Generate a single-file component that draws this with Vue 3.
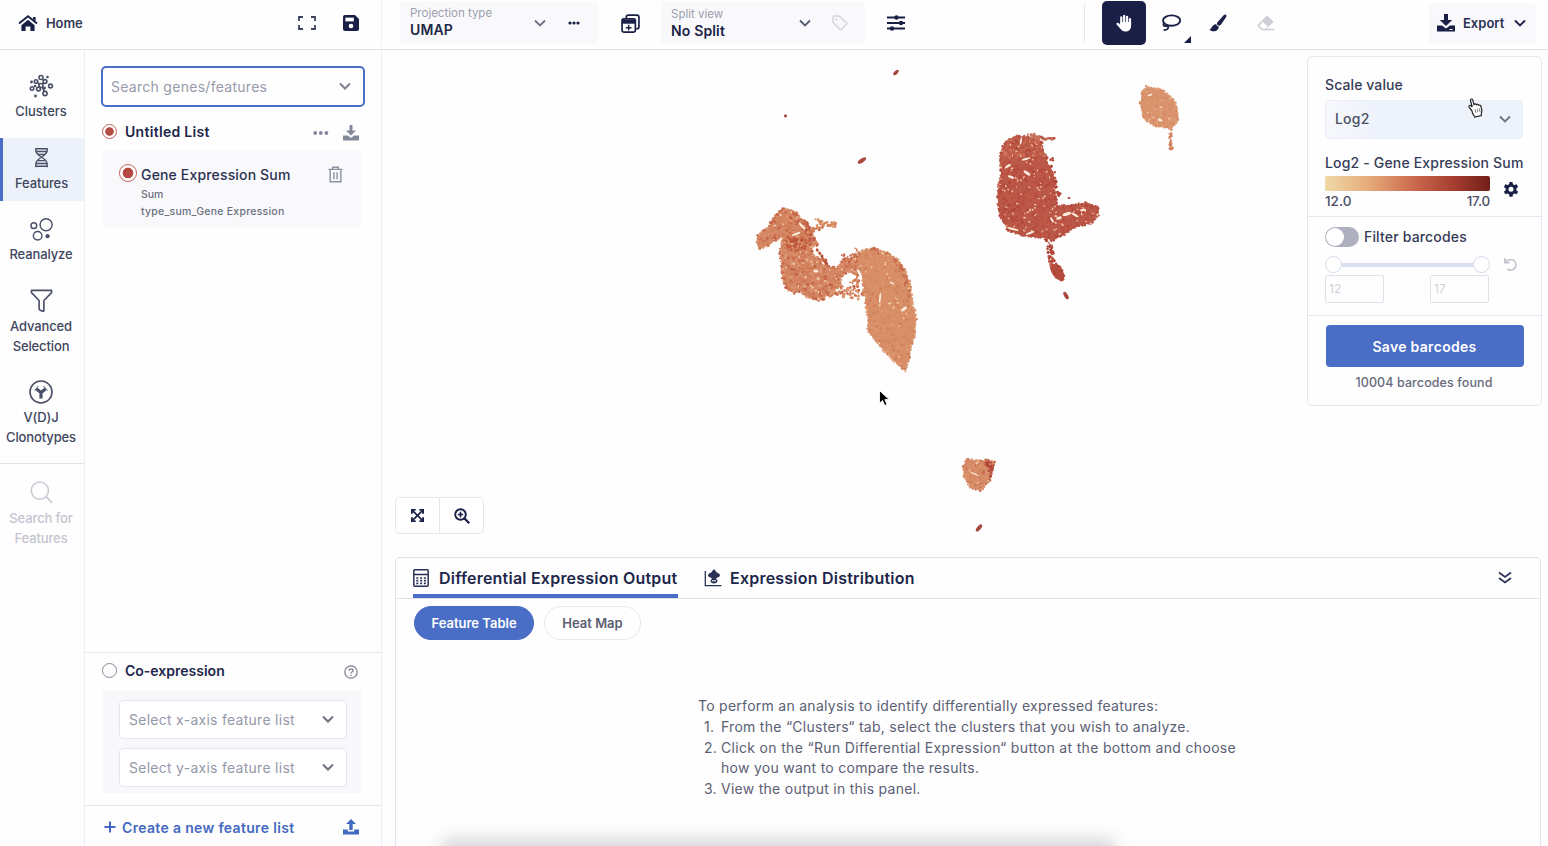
<script setup>
const navItems = [
  { id: 'clusters', lines: ['Clusters'] },
  { id: 'features', lines: ['Features'], active: true },
  { id: 'reanalyze', lines: ['Reanalyze'] },
  { id: 'advanced', lines: ['Advanced', 'Selection'] },
  { id: 'vdj', lines: ['V(D)J', 'Clonotypes'] },
]
const axes = ['Select x-axis feature list', 'Select y-axis feature list']

// Seeded generator keeps the projection stable between renders.
let seed = 1337
function rand() {
  seed = (seed * 1664525 + 1013904223) % 4294967296
  return seed / 4294967296
}
function inside(x, y, pts) {
  let hit = false
  for (let i = 0, j = pts.length - 1; i < pts.length; j = i++) {
    const [xi, yi] = pts[i]
    const [xj, yj] = pts[j]
    if (yi > y !== yj > y && x < ((xj - xi) * (y - yi)) / (yj - yi) + xi) hit = !hit
  }
  return hit
}
const shapes = [
  {
    ox: 740, oy: 190, fill: '#d48662', dots: 420, edge: true,
    tones: ['#cf7a56', '#da8f69', '#c96c4b', '#d99470', '#c25f48', '#cf7a57'], gaps: 60,
    pts: [[130,54],[168,65],[180,85],[203,98],[212,125],[235,163],[215,170],[214,195],[245,207],[262,228],[290,234],[312,206],[345,202],[362,196],[355,232],[325,238],[303,262],[300,290],[268,308],[245,330],[205,323],[180,303],[165,310],[140,296],[128,270],[125,220],[120,185],[130,152],[103,147],[85,166],[55,176],[52,137],[85,112],[105,77]],
  },
  {
    ox: 740, oy: 190, fill: 'none', dots: 46,
    tones: ['#b94f3a', '#c4623f'], gaps: 0,
    pts: [[130,148],[160,140],[205,150],[215,165],[190,180],[150,185]],
  },
  {
    ox: 740, oy: 190, fill: 'none', dots: 34,
    tones: ['#bd5a45', '#c8694a'], gaps: 0,
    pts: [[165,68],[182,85],[205,98],[214,130],[230,160],[212,158],[195,115],[170,95]],
  },
  {
    ox: 740, oy: 190, fill: '#d88f68', dots: 330, edge: true,
    tones: ['#dc966f', '#d4875f', '#d98e66', '#d08059', '#dd9b73'], gaps: 26,
    pts: [[350,205],[370,180],[400,174],[440,188],[475,210],[495,240],[508,275],[516,330],[528,390],[522,440],[510,490],[495,543],[465,515],[425,475],[385,425],[383,380],[378,330],[372,290],[362,240]],
  },
  {
    ox: 740, oy: 190, fill: 'none', dots: 34,
    tones: ['#c4694c', '#cb7351'], gaps: 0,
    pts: [[365,182],[400,174],[440,188],[475,210],[495,240],[508,275],[516,330],[506,325],[488,262],[462,215],[400,184]],
  },
  {
    ox: 740, oy: 190, fill: 'none', dots: 85,
    tones: ['#d58560', '#c8694a', '#dc9870'], gaps: 0,
    pts: [[270,290],[335,285],[375,275],[380,322],[355,332],[290,316],[255,325]],
  },
  {
    ox: 740, oy: 190, fill: 'none', dots: 42,
    tones: ['#d58560', '#c8694a', '#dc9870'], gaps: 0,
    pts: [[305,235],[350,225],[360,280],[325,282],[352,255]],
  },
  {
    ox: 740, oy: 190, fill: 'none', dots: 64,
    tones: ['#d88d64', '#dfa075', '#cf7650'], gaps: 0,
    pts: [[218,80],[250,96],[285,96],[295,114],[258,108],[242,120],[200,128],[238,100]],
  },
  {
    ox: 740, oy: 190, fill: 'none', dots: 18,
    tones: ['#b94f3a', '#c4623f'], gaps: 0,
    pts: [[228,175],[240,178],[268,218],[258,222]],
  },
  {
    ox: 740, oy: 190, fill: 'none', dots: 28,
    tones: ['#c4694c', '#d58560'], gaps: 0,
    pts: [[345,175],[362,182],[358,205],[305,208],[300,196],[345,192]],
  },
  {
    ox: 980, oy: 60, fill: '#bb5848', dots: 620, edge: true,
    tones: ['#b95042', '#b04638', '#c05c4b', '#b64c3e', '#bd5748'], gaps: 105,
    pts: [[100,231],[140,229],[183,243],[193,280],[203,312],[222,350],[226,400],[233,440],[290,432],[325,430],[352,440],[354,465],[330,490],[290,498],[245,527],[220,538],[190,533],[130,527],[85,512],[62,470],[54,430],[54,380],[64,340],[60,290],[72,252]],
  },
  {
    ox: 980, oy: 60, fill: 'none', dots: 90,
    tones: ['#c5654f', '#c96d56', '#c0604d'], gaps: 0,
    pts: [[100,231],[140,229],[183,243],[190,285],[120,290],[62,305],[72,252]],
  },
  {
    ox: 980, oy: 60, fill: 'none', dots: 68,
    tones: ['#b04435', '#c25f4c', '#a93c30'], gaps: 0,
    pts: [[192,535],[218,540],[224,590],[245,630],[215,640],[204,590]],
  },
  {
    ox: 980, oy: 60, fill: '#b54a3c', dots: 30,
    tones: ['#b04435', '#b84e40'], gaps: 0,
    pts: [[216,610],[240,618],[256,648],[244,664],[226,655],[212,630]],
  },
  {
    ox: 980, oy: 60, fill: 'none', dots: 34,
    tones: ['#c9755a', '#ba5242'], gaps: 0,
    pts: [[140,222],[175,222],[195,235],[228,226],[228,236],[200,240],[170,238],[160,230]],
  },
  {
    ox: 980, oy: 60, fill: 'none', dots: 40,
    tones: ['#b04435', '#ba5242'], gaps: 0,
    pts: [[192,282],[222,295],[220,318],[228,350],[232,395],[252,404],[228,410],[210,340]],
  },
  {
    ox: 980, oy: 60, fill: '#da946d', dots: 100, edge: true,
    tones: ['#dc9870', '#d78f69', '#dfa07a', '#d58b66'], gaps: 7,
    pts: [[485,95],[500,80],[540,88],[573,110],[590,140],[594,180],[575,206],[530,198],[490,175],[482,140]],
  },
  {
    ox: 980, oy: 60, fill: 'none', dots: 22,
    tones: ['#d78c65', '#c9755a'], gaps: 0,
    pts: [[567,206],[577,206],[578,268],[569,268]],
  },
  {
    ox: 963, oy: 459, fill: '#d78c68', dots: 90, edge: true,
    tones: ['#dc966f', '#cf7e5c', '#ca7052', '#d88f68'], gaps: 7,
    pts: [[12,3],[45,3],[97,8],[86,36],[79,66],[52,93],[24,86],[3,52],[3,20]],
  },
  {
    ox: 963, oy: 459, fill: 'none', dots: 22,
    tones: ['#b04435', '#ba5242'], gaps: 0,
    pts: [[62,8],[97,8],[88,36],[80,60],[72,34]],
  },
].map((s) => {
  const pts = s.pts.map(([x, y]) => [s.ox + x / 3, s.oy + y / 3])
  const xs = pts.map((p) => p[0])
  const ys = pts.map((p) => p[1])
  const x0 = Math.min(...xs), x1 = Math.max(...xs)
  const y0 = Math.min(...ys), y1 = Math.max(...ys)
  const pick = () => {
    for (let i = 0; i < 200; i++) {
      const x = x0 + rand() * (x1 - x0)
      const y = y0 + rand() * (y1 - y0)
      if (inside(x, y, pts)) return [x, y]
    }
    return pts[0]
  }
  const dots = []
  for (let i = 0; i < s.dots; i++) {
    const [x, y] = pick()
    dots.push({ x, y, r: 0.8 + rand() * 0.8, c: s.tones[Math.floor(rand() * s.tones.length)] })
  }
  if (s.edge) {
    pts.forEach(([ax, ay], i) => {
      const [bx, by] = pts[(i + 1) % pts.length]
      const n = Math.ceil(Math.hypot(bx - ax, by - ay) / 2.6)
      for (let k = 0; k < n; k++) {
        const t = k / n
        dots.push({
          x: ax + (bx - ax) * t + (rand() - 0.5) * 1.8,
          y: ay + (by - ay) * t + (rand() - 0.5) * 1.8,
          r: 0.8 + rand() * 0.7,
          c: s.tones[Math.floor(rand() * s.tones.length)],
        })
      }
    })
  }
  const gaps = []
  for (let i = 0; i < s.gaps; i++) {
    const [x, y] = pick()
    gaps.push({ x, y, rx: 0.6 + rand() * 1.1, ry: 0.45 + rand() * 0.45, a: Math.floor(rand() * 180) })
  }
  return { fill: s.fill, points: pts.map((p) => p.map((v) => v.toFixed(1)).join(',')).join(' '), dots, gaps }
})
const voids = [
  [802, 226, 4.5, 1.2, 50], [796, 234, 4.5, 1.1, -20], [816, 271, 2.6, 1.6, 0], [823, 263, 2, 1, 40], [780, 240, 3, 1.2, -40], [880, 298, 0.9, 5, 5],
  [904, 309, 3.5, 1.4, -35], [892, 283, 2.2, 0.9, 20], [1026, 159, 4.5, 1, -15], [1027, 173, 4, 1.4, 35], [1008, 166, 3.2, 1.2, -30],
  [1011, 177, 3.4, 1.2, 20], [1067, 214, 4.5, 1.6, -15], [1075, 215, 4, 1.1, 30], [1059, 218, 3, 1.3, -20], [1083, 210, 3, 1.2, -10], [1013, 229, 6, 1.1, 15], [1030, 233, 4.5, 1, -20],
  [1021, 141, 0.9, 3.6, 10], [1150, 95, 2.4, 0.9, -20], [1160, 120, 2.4, 1.2, 20], [1052, 220, 3, 1.1, 60], [975, 474, 5, 0.6, 25],
]
const specks = [
  [896, 72.5, 3.4, 1.8, -45], [785.5, 116, 1.6, 1.4, 0], [862, 160.5, 4.8, 2, -35], [1066, 295.5, 1.9, 4.2, -30], [979, 528, 4.4, 1.9, -50], [1069, 198, 1.5, 1.1, 0],
]
</script>

<template>
  <div class="app">
    <header class="topbar">
      <div class="top-left">
        <svg class="i-home" viewBox="0 0 20 17"><path d="M1 8.6 10 1.2l9 7.4" fill="none" stroke="#191f45" stroke-width="1.9" /><path d="M15 2h2.6v4.2L15 4z M10 4.8l6.6 5.4V16h-4.2v-4.6H7.6V16H3.4v-5.8z" fill="#191f45" /></svg>
        <span class="home">Home</span>
        <svg class="i-full" viewBox="0 0 18 14"><path d="M1 5V1h4M13 1h4v4M17 9v4h-4M5 13H1V9" fill="none" stroke="#3b4160" stroke-width="1.8" /></svg>
        <svg class="i-save" viewBox="0 0 16 16"><path d="M2 0h10l4 4v10a2 2 0 0 1-2 2H2a2 2 0 0 1-2-2V2a2 2 0 0 1 2-2z" fill="#191f45" /><path d="M2.4 2.6h8.4v3.8H2.4z" fill="#fff" /><circle cx="8" cy="11" r="2.3" fill="#fff" /></svg>
      </div>
      <div class="top-main">
        <div class="proj">
          <div class="pick pick-a"><span class="cap">Projection type</span><b>UMAP</b></div>
          <svg class="chev" viewBox="0 0 12 8"><path d="M1 1.5l5 5 5-5" fill="none" stroke="#6c7184" stroke-width="1.8" /></svg>
          <svg class="i-dots" viewBox="0 0 12 4"><g fill="#191f45"><circle cx="2" cy="2" r="1.6" /><circle cx="6" cy="2" r="1.6" /><circle cx="10" cy="2" r="1.6" /></g></svg>
        </div>
        <svg class="i-add" viewBox="0 0 18 18"><path d="M5 4V3a2 2 0 0 1 2-2h8a2 2 0 0 1 2 2v9a2 2 0 0 1-2 2h-1" fill="none" stroke="#191f45" stroke-width="1.6" /><rect x="1" y="4.5" width="12.6" height="12.6" rx="1.6" fill="#fff" stroke="#191f45" stroke-width="1.6" /><path d="M1 5h12.6v4.2H1z" fill="#191f45" /><path d="M7.3 10.300v5.400M4.600 13h5.400" stroke="#191f45" stroke-width="1.3" /></svg>
        <div class="proj split">
          <div class="pick pick-b"><span class="cap">Split view</span><b>No Split</b></div>
          <svg class="chev" viewBox="0 0 12 8"><path d="M1 1.5l5 5 5-5" fill="none" stroke="#565b74" stroke-width="1.8" /></svg>
          <svg class="i-tag" viewBox="0 0 16 16"><path d="M1 2.2C1 1.5 1.5 1 2.2 1h5L15 8.6 8.8 15 1 7.4z" fill="none" stroke="#d3d4dc" stroke-width="1.4" stroke-linejoin="round" /><circle cx="4.5" cy="4.5" r="1.1" fill="#d3d4dc" /></svg>
        </div>
        <svg class="i-sliders" viewBox="0 0 18 16"><path d="M0 2.5h18M0 8h18M0 13.5h18" stroke="#191f45" stroke-width="1.9" /><g fill="#191f45"><circle cx="9.5" cy="2.5" r="2.2" /><circle cx="14" cy="8" r="2.2" /><circle cx="5" cy="13.5" r="2.2" /></g></svg>
        <div class="tools">
          <span class="rule"></span>
          <span class="hand"><svg viewBox="0 0 16 18"><g fill="none" stroke="#fff" stroke-width="2.2" stroke-linecap="round"><path d="M5.3 10V3.4M8.2 9V1.8M11.1 9V2.8M14 10V5.2" /></g><path d="M4.2 8h10.9v4.2a5.3 5.3 0 0 1-5.3 5.3H9c-2 0-3.2-.9-4.4-2.4L.6 10.4c-.8-1.2.9-2.4 1.9-1.4l1.7 1.6z" fill="#fff" /></svg></span>
          <svg class="i-lasso" viewBox="0 0 20 18"><ellipse cx="10.6" cy="6.600" rx="8.6" ry="5.200" fill="none" stroke="#191f45" stroke-width="1.9" /><path d="M3.200 9c-1.600 1.600-.6 3.400 1.600 3.100 2.600-.5 3.300 1.400 1.800 2.800-1 1-2.400 1.300-4 1.200" fill="none" stroke="#191f45" stroke-width="1.8" /></svg>
          <i class="corner"></i>
          <svg class="i-brush" viewBox="0 0 18 18"><path d="M16.900.7c.8.7.6 1.600.1 2.500l-5 7.400c-1 1.300-2.100 1.500-3.200.6-1.200-1-1.100-2.100-.1-3.200L14.900 1c.7-.6 1.400-.8 2-.3z M7.200 9.900c.2 1.500 1.100 2.300 2.500 2.600.1 3-2.300 4.900-5.200 4.700-1.700 0-3.100-.6-4.200-1.800 2.600-.2 2-4.600 6.900-5.500z" fill="#191f45" /></svg>
          <svg class="i-eraser" viewBox="0 0 18 16"><path d="M9.200 1.200a1.300 1.300 0 0 1 1.800 0l4.800 4.600a1.300 1.300 0 0 1 0 1.900l-6.300 6.100h7.800v1.400H4.800L1 11.500a1.300 1.300 0 0 1 0-1.900z" fill="#cdced6" /><path d="M5.800 6.700l5 4.900-2.200 2.100H5.300L2.400 10.600z" fill="#fff" /></svg>
        </div>
        <div class="export">
          <svg class="i-dl" viewBox="0 0 18 18"><path d="M7 0h4v6h4.200L9 12 2.800 6H7z M0 11.500h5l4 3 4-3h5V17.500H0z" fill="#191f45" /><path d="M12.500 15.500h3" stroke="#fff" /></svg>
          <span>Export</span>
          <svg class="chev" viewBox="0 0 12 8"><path d="M1 1.500l5 5 5-5" fill="none" stroke="#191f45" stroke-width="1.800" /></svg>
        </div>
      </div>
    </header>

    <div class="body">
      <nav class="rail">
        <div v-for="n in navItems" :key="n.id" class="nav" :class="[n.id, { active: n.active }]">
          <svg v-if="n.id === 'clusters'" viewBox="0 0 24 24"><g fill="none" stroke="#4a4f66" stroke-width="1.600"><circle cx="12" cy="3.500" r="2" /><circle cx="7" cy="7.500" r="1.700" /><circle cx="16" cy="7.500" r="1.900" /><circle cx="21.500" cy="12" r="1.900" /><circle cx="12" cy="11.500" r="2" /><circle cx="3" cy="14.500" r="1.700" /><circle cx="9.500" cy="15" r="1.900" /><circle cx="16" cy="19.500" r="2.100" /><path d="M13 13l2.500 4.500M8.500 8.500l2 1.800M14.500 8.800l-1.500 1.400" /></g><g fill="#4a4f66"><circle cx="18.500" cy="3" r="1.300" /><circle cx="2.500" cy="8" r="1.400" /><circle cx="15.500" cy="14" r="1.400" /><circle cx="6.500" cy="22" r="1.400" /><circle cx="6" cy="12" r="1.300" /></g></svg>
          <svg v-else-if="n.id === 'features'" viewBox="0 0 24 24"><path d="M5.500 1v3c0 7 13 8 13 15.500V23M18.500 1v3c0 7-13 8-13 15.500V23M5 2h14M6 5.200h12M8 8.400h8M8 15.600h8M6 18.800h12M5 22h14" fill="none" stroke="#4a4f66" stroke-width="1.600" /></svg>
          <svg v-else-if="n.id === 'reanalyze'" viewBox="0 0 24 24"><g fill="none" stroke="#4a4f66" stroke-width="1.500"><circle cx="4" cy="8" r="3" /><circle cx="16.800" cy="7" r="6.300" /><circle cx="8" cy="18.500" r="4.500" /></g><circle cx="18.300" cy="19" r="2.200" fill="#4a4f66" /></svg>
          <svg v-else-if="n.id === 'advanced'" viewBox="0 0 24 24"><path d="M1.500 1.500h21v2.300L14.500 12v11c-2 .6-5-1-5-2.500V12L1.500 3.800z" fill="none" stroke="#4a4f66" stroke-width="1.700" stroke-linejoin="round" /></svg>
          <svg v-else viewBox="0 0 24 24"><circle cx="12" cy="12" r="11" fill="none" stroke="#4a4f66" stroke-width="1.600" /><path d="M12 18.500v-6L7.500 9M12 12.500l4.500-3.500" fill="none" stroke="#4a4f66" stroke-width="3.200" /><path d="M5.500 10.500l4-4.500M18.500 10.500l-4-4.500" stroke="#4a4f66" stroke-width="1" /></svg>
          <span v-for="l in n.lines" :key="l">{{ l }}</span>
        </div>
        <div class="nav muted">
          <svg viewBox="0 0 24 24"><circle cx="10.300" cy="10" r="9" fill="none" stroke="#c6c8d3" stroke-width="1.600" /><path d="M17 16.500l6 6.300" stroke="#c6c8d3" stroke-width="1.600" /></svg>
          <span>Search for</span><span>Features</span>
        </div>
      </nav>

      <aside class="panel">
        <div class="search"><span>Search genes/features</span><svg class="chev" viewBox="0 0 12 8"><path d="M1 1.500l5 5 5-5" fill="none" stroke="#7b7f8e" stroke-width="2" /></svg></div>
        <div class="list-head">
          <i class="radio on"></i><b>Untitled List</b>
          <svg class="i-more" viewBox="0 0 16 4"><g fill="#85889a"><circle cx="2.200" cy="2" r="1.900" /><circle cx="7.800" cy="2" r="1.900" /><circle cx="13.400" cy="2" r="1.900" /></g></svg>
          <svg class="i-get" viewBox="0 0 16 16"><path d="M6.500 0h3v5.500h3.500L8 10.500 3 5.500h3.500z M0 10.500h4.800L8 13l3.200-2.500H16V15.500H0z" fill="#85889a" /></svg>
        </div>
        <div class="gene">
          <i class="radio big on"></i>
          <div class="gene-text"><span class="g1">Gene Expression Sum</span><span class="g2">Sum</span><span class="g3">type_sum_Gene Expression</span></div>
          <svg class="i-trash" viewBox="0 0 16 18"><path d="M.500 3.500h15M5 3.500V1.200h6v2.300M2.300 3.500v13.300h11.400V3.500M6.300 6.500v7.500M9.700 6.500v7.500" fill="none" stroke="#8d90a3" stroke-width="1.500" /></svg>
        </div>
        <div class="coexp">
          <div class="co-head"><i class="radio"></i><b>Co-expression</b><svg class="i-help" viewBox="0 0 14 14"><circle cx="7" cy="7" r="6.200" fill="none" stroke="#7b7f90" stroke-width="1.200" /><path d="M5 5.700c0-2.500 4-2.400 4-.1 0 1.400-2 1.400-2 2.800M7 9.700v1.200" fill="none" stroke="#7b7f90" stroke-width="1.300" /></svg></div>
          <div class="axes"><div v-for="a in axes" :key="a" class="axis"><span>{{ a }}</span><svg class="chev" viewBox="0 0 12 8"><path d="M1 1.500l5 5 5-5" fill="none" stroke="#6c7082" stroke-width="2" /></svg></div></div>
        </div>
        <div class="create">
          <svg class="i-plus" viewBox="0 0 12 12"><path d="M6 .500v11M.500 6h11" stroke="#4369c2" stroke-width="2" /></svg>
          <span>Create a new feature list</span>
          <svg class="i-up" viewBox="0 0 16 16"><path d="M8 0l5 5H9.700v6H6.300V5H3z M0 10.500h4.800v2h6.400v-2H16V15.500H0z" fill="#4369c2" /></svg>
        </div>
      </aside>

      <main class="main">
        <section class="plot">
          <svg class="umap" viewBox="382 50 1166 507">
            <g v-for="(s, i) in shapes" :key="i">
              <polygon :points="s.points" :fill="s.fill" />
              <circle v-for="(d, k) in s.dots" :key="k" :cx="d.x" :cy="d.y" :r="d.r" :fill="d.c" />
              <ellipse v-for="(g, k) in s.gaps" :key="'g' + k" :rx="g.rx" :ry="g.ry" fill="#f3cfae" :transform="`translate(${g.x} ${g.y}) rotate(${g.a})`" />
            </g>
            <ellipse v-for="(v, i) in voids" :key="'v' + i" :rx="v[2]" :ry="v[3]" fill="#fbeedf" :transform="`translate(${v[0]} ${v[1]}) rotate(${v[4]})`" />
            <ellipse v-for="(v, i) in specks" :key="'s' + i" :rx="v[2]" :ry="v[3]" fill="#a9483d" :transform="`translate(${v[0]} ${v[1]}) rotate(${v[4]})`" />
            <path d="M879.500 390.500v12.800l3-2.800 2.200 5 2.400-1-2.200-4.900h4.300z" fill="#000" stroke="#fff" stroke-width=".9" />
          </svg>
          <div class="zoomers">
            <span><svg viewBox="0 0 14 14"><path d="M2 2l10 10M12 2L2 12" stroke="#191f45" stroke-width="1.700" /><path d="M1 5V1h4M9 1h4v4M13 9v4H9M5 13H1V9" fill="none" stroke="#191f45" stroke-width="2" /></svg></span>
            <span><svg viewBox="0 0 16 16"><circle cx="6.500" cy="6.500" r="5.300" fill="none" stroke="#191f45" stroke-width="1.900" /><path d="M10.500 10.500l4.700 4.700" stroke="#191f45" stroke-width="2.300" /><path d="M6.500 3.800v5.400M3.800 6.500h5.400" stroke="#191f45" stroke-width="1.600" /></svg></span>
          </div>
          <div class="legend">
            <div class="block scale">
              <span class="t scale-t">Scale value</span>
              <div class="log"><span>Log2</span><svg class="chev" viewBox="0 0 12 8"><path d="M1 1.500l5 5 5-5" fill="none" stroke="#6c7184" stroke-width="1.800" /></svg>
                <svg class="pointer" viewBox="0 0 17 20"><path d="M4.800 12.500L2.200 9.300c-1-1.300.9-2.700 2-1.500l1 1.200L3.500 2.500C3.100.9 5.200.4 5.700 1.900L7 6.500c.8-.9 2-.7 2.400.2.900-.6 1.900-.3 2.300.6 1-.4 2 0 2.300 1.200l.8 3.300c.4 1.700-.1 2.500-.5 3.400l.1 2.300-6.700 1.500-.9-1.800c-.9-.6-1.600-2.900-2-4.700z" fill="#fff" stroke="#222" stroke-width="1.200" /><path d="M8 11.300l.8 3.500M10.200 10.800l.8 3.500M12.300 10.300l.8 3.500" stroke="#555" stroke-width=".8" /></svg>
              </div>
              <span class="t log-t">Log2 - Gene Expression Sum</span>
              <div class="bar-row">
                <div class="bar-col"><div class="bar"></div><div class="ends"><span>12.0</span><span class="hi">17.0</span></div></div>
                <svg class="i-gear" viewBox="0 0 16 16"><path d="M6.500 0h3l.4 2.300 1.500.8 2.200-.8 1.500 2.600-1.800 1.500v1.800l1.800 1.500-1.500 2.600-2.200-.8-1.500.9-.4 2.300h-3l-.4-2.300-1.500-.9-2.200.8L.9 9.700l1.800-1.500V6.400L.9 4.900l1.500-2.600 2.200.8 1.500-.8z" fill="#191f45" /><circle cx="8" cy="7.300" r="2.500" fill="#fff" /></svg>
              </div>
            </div>
            <div class="block filter">
              <div class="fl"><i class="toggle"></i><span class="t filter-t">Filter barcodes</span></div>
              <div class="range"><i></i><u></u><i></i><svg class="i-undo" viewBox="0 0 16 16"><path d="M2 1v5h5M2.500 5.500C6 .8 13.500 2.500 13.800 8c.2 5-5.400 7.400-9.300 4.800" fill="none" stroke="#c3c5d0" stroke-width="1.800" /></svg></div>
              <div class="nums"><span>12</span><span>17</span></div>
            </div>
            <div class="block save"><div class="btn"><span>Save barcodes</span></div><span class="found">10004 barcodes found</span></div>
          </div>
        </section>

        <section class="output">
          <div class="tabs">
            <div class="tab on"><svg class="i-calc" viewBox="0 0 16 18"><rect x=".8" y=".8" width="14.400" height="16.400" rx="1" fill="none" stroke="#2b3154" stroke-width="1.500" /><path d="M1 5.500h14" stroke="#2b3154" stroke-width="1.500" /><path d="M3.300 9h9.600M3.300 11.700h9.600M3.300 14.300h9.600" stroke="#2b3154" stroke-width="1.700" stroke-dasharray="2 1.800" /></svg><span class="tab-a">Differential Expression Output</span></div>
            <div class="tab"><svg class="i-dist" viewBox="0 0 18 18"><path d="M1.300 2v14.700H17.500" fill="none" stroke="#2b3154" stroke-width="1.300" /><path d="M10 .5c1.200 0 1.600 1.500 2.300 2.500 1 1 3.700 1.500 3.700 3.300S12.800 8.700 12 9.500c0 .8 1.500 1 1.500 2.500S12 14.500 10 14.500 6.500 13.500 6.500 12 8 10.300 8 9.500C7.200 8.700 4 8.100 4 6.300S6.700 4 7.700 3c.7-1 1.100-2.500 2.300-2.500z" fill="#2b3154" /><path d="M8 11.800h4" stroke="#fff" /></svg><span class="tab-b">Expression Distribution</span></div>
            <svg class="i-dbl" viewBox="0 0 14 14"><path d="M1 1.500l6 4.500 6-4.500M1 7l6 4.500L13 7" fill="none" stroke="#2b3154" stroke-width="1.700" /></svg>
          </div>
          <div class="pills"><span class="pill on">Feature Table</span><span class="pill">Heat Map</span></div>
          <div class="help">
            <p>To perform an analysis to identify differentially expressed features:</p>
            <p class="li"><span>1.</span>From the “Clusters“ tab, select the clusters that you wish to analyze.</p>
            <p class="li wide"><span>2.</span>Click on the “Run Differential Expression“ button at the bottom and choose</p>
            <p class="li"><span></span>how you want to compare the results.</p>
            <p class="li"><span>3.</span>View the output in this panel.</p>
          </div>
          <div class="shade"></div>
        </section>
      </main>
    </div>
  </div>
</template>

<style>
html, body { background: #fefefe; overflow: hidden; }
</style>
<style scoped>
* { box-sizing: border-box; }
.app { width: 1548px; height: 846px; display: flex; flex-direction: column; overflow: hidden; font-family: Inter, "Liberation Sans", sans-serif; color: #353b57; background: #fefefe; }
svg { display: block; flex: none; overflow: visible; }
span, b { white-space: nowrap; }
.chev { width: 12px; height: 8px; }
.topbar { height: 50px; flex: none; display: flex; border-bottom: 1px solid #e3e2ea; }
.top-left { width: 382px; height: 46px; display: flex; align-items: center; padding-left: 18px; border-right: 1px solid #f2f1f6; }
.i-home { width: 20px; height: 17px; }
.home { font-size: 13px; font-weight: 600; letter-spacing: -.1px; margin-left: 8px; width: 244px; flex: none; }
.i-full { width: 18px; height: 14px; margin-left: 8px; }
.i-save { width: 16px; height: 16px; margin-left: 27px; }
.top-main { flex: 1; height: 46px; display: flex; align-items: center; padding-left: 18px; }
.proj { width: 198px; height: 43px; margin-bottom: 2px; background: #f9f9fc; border-radius: 4px; display: flex; align-items: center; padding-left: 10px; }
.pick { display: flex; flex-direction: column; width: 124px; }
.pick b { font-size: 14px; line-height: 18px; font-weight: 600; color: #232844; letter-spacing: .15px; }
.pick-a { margin-top: -1px; }
.pick-b { margin-top: 1px; width: 128px; }
.pick-b b { color: #191f45; line-height: 17px; }
.cap { font-size: 11.5px; line-height: 16px; color: #9c9eab; }
.proj .chev { margin-top: 2px; }
.i-dots { width: 12px; height: 4px; margin: 2px 0 0 22px; }
.i-add { width: 19px; height: 19px; margin-left: 23px; }
.split { width: 204px; margin-left: 21px; }
.i-tag { width: 16px; height: 16px; margin: 2px 0 0 21px; }
.i-sliders { width: 18px; height: 16px; margin-left: 22px; }
.tools { display: flex; align-items: center; margin-left: 179px; height: 46px; position: relative; }
.rule { width: 1px; height: 38px; background: #e8e8ee; }
.hand { width: 44px; height: 44px; margin-left: 17px; background: #191f45; border-radius: 5px; display: flex; align-items: center; justify-content: center; }
.hand svg { width: 16px; height: 18px; }
.i-lasso { width: 20px; height: 18px; margin-left: 15px; }
.corner { position: absolute; left: 100px; top: 36px; border-left: 7px solid transparent; border-bottom: 7px solid #191f45; }
.i-brush { width: 18px; height: 18px; margin-left: 28px; }
.i-eraser { width: 18px; height: 16px; margin-left: 30px; }
.export { width: 107px; height: 41px; margin-left: 154px; background: #f9f9fc; border-radius: 4px; display: flex; align-items: center; padding-left: 8px; }
.i-dl { width: 18px; height: 18px; }
.export span { font-size: 13px; font-weight: 600; margin-left: 8px; width: 51px; color: #2b3154; }
.body { flex: 1; display: flex; min-height: 0; }
.rail { width: 85px; flex: none; border-right: 1px solid #eeedf4; display: flex; flex-direction: column; }
.nav { display: flex; flex-direction: column; align-items: center; width: 84px; padding-right: 2px; font-size: 13px; line-height: 19.7px; font-weight: 500; color: #41465f; letter-spacing: -.12px; }
.nav svg { width: 24px; height: 24px; margin-bottom: 4px; }
.clusters { padding-top: 24px; height: 88px; }
.clusters span { letter-spacing: 0; }
.features { height: 63px; padding-top: 9px; }
.features svg { width: 21px; height: 21px; margin-bottom: 6px; }
.active { background: #edf2fa; border-left: 3px solid #4a6dc5; padding-right: 4px; }
.reanalyze { padding-top: 17px; height: 87px; }
.reanalyze svg { height: 23px; width: 23px; }
.advanced { height: 91px; }
.advanced svg { height: 23px; width: 23px; margin-bottom: 5px; margin-top: 1px; }
.vdj { height: 85px; border-bottom: 1px solid #e2e1ee; }
.vdj svg { margin-top: 1px; }
.muted { padding-top: 17px; color: #c3c5cf; }
.muted svg { width: 23px; height: 23px; margin-bottom: 5px; }
.panel { width: 297px; flex: none; border-right: 1px solid #edecf3; display: flex; flex-direction: column; }
.search { width: 264px; height: 41px; margin: 16px 0 0 16px; border: 2px solid #4a6dc5; border-radius: 5px; display: flex; align-items: center; justify-content: space-between; padding: 0 12px 1px 8px; font-size: 14px; letter-spacing: .28px; color: #969aaa; }
.list-head { display: flex; align-items: center; height: 16px; margin: 16px 0 0 17px; }
.radio { width: 15px; height: 15px; border: 1.5px solid #85889a; border-radius: 50%; flex: none; }
.radio.on { border-color: #c4625a; background: radial-gradient(circle, #b44b43 3.9px, #fff 4.6px); }
.radio.big { width: 18px; height: 18px; }
.radio.big.on { background: radial-gradient(circle, #b44b43 5px, #fff 5.7px); }
.list-head b, .co-head b { font-size: 14px; font-weight: 600; color: #20264a; margin-left: 8px; width: 188px; }
.list-head b { letter-spacing: .3px; }
.i-more { width: 16px; height: 4px; margin-top: 3px; }
.i-get { width: 16px; height: 16px; margin: 3px 0 0 14px; }
.gene { width: 258px; height: 77px; margin: 12px 0 0 18px; background: #f9f9fc; display: flex; padding-left: 16px; }
.gene .radio { margin-top: 13px; }
.gene-text { display: flex; flex-direction: column; padding: 14px 0 0 4px; width: 191px; }
.g1 { font-size: 14px; line-height: 20px; font-weight: 500; color: #2a3050; letter-spacing: .16px; }
.g2, .g3 { font-size: 10.5px; line-height: 17px; color: #6b6f80; font-weight: 500; letter-spacing: .24px; }
.g2 { margin-top: 1px; letter-spacing: 0; }
.i-trash { width: 15px; height: 17px; margin-top: 15px; }
.coexp { margin-top: auto; border-top: 1px solid #e6e5ee; height: 153px; padding-top: 10px; }
.co-head { display: flex; align-items: center; height: 15px; padding-left: 17px; }
.co-head b { width: 219px; }
.i-help { width: 14px; height: 14px; margin-top: 3px; }
.axes { width: 258px; margin: 13px 0 0 18px; height: 102px; background: #f8f8fb; padding: 9px 15px 0 16px; display: flex; flex-direction: column; gap: 9px; }
.axis { height: 39px; width: 228px; border: 1px solid #e6e5ed; border-radius: 4px; background: #fff; display: flex; align-items: center; justify-content: space-between; padding: 0 12px 1px 9px; font-size: 14px; letter-spacing: .27px; color: #9498a8; }
.create { height: 41px; border-top: 1px solid #e6e5ee; display: flex; align-items: center; padding: 2px 0 0 19px; color: #4369c2; font-size: 14px; font-weight: 600; }
.i-plus { width: 12px; height: 12px; }
.create span { margin-left: 6px; width: 221px; letter-spacing: .33px; }
.i-up { width: 16px; height: 16px; }
.main { flex: 1; min-width: 0; display: flex; flex-direction: column; }
.plot { height: 507px; flex: none; position: relative; }
.umap { width: 1166px; height: 507px; }
.zoomers { position: absolute; left: 13px; top: 447px; width: 89px; height: 37px; border: 1px solid #e6e5ed; border-radius: 5px; display: flex; background: #fff; }
.zoomers span { flex: 1; display: flex; align-items: center; justify-content: center; }
.zoomers span + span { border-left: 1px solid #e6e5ed; }
.zoomers svg { width: 13px; height: 13px; }
.zoomers span + span svg { width: 16px; height: 16px; }
.legend { position: absolute; left: 925px; top: 6px; width: 235px; height: 350px; border: 1px solid #e6e5ef; border-radius: 5px; background: #fefefe; }
.block { padding: 0 18px 0 17px; display: flex; flex-direction: column; }
.block + .block { border-top: 1px solid #e6e5ef; }
.t { font-size: 14px; line-height: 20px; color: #353b57; font-weight: 500; letter-spacing: .17px; }
.scale { height: 159px; padding-top: 18px; }
.scale-t { letter-spacing: .1px; }
.log { height: 39px; margin-top: 5px; background: linear-gradient(90deg, #f6f8fc, #eef2fb 25%); border: 1px solid #eceef6; border-radius: 4px; display: flex; align-items: center; justify-content: space-between; padding: 0 11px 2px 9px; font-size: 14px; font-weight: 500; color: #4a4f63; position: relative; letter-spacing: .2px; }
.pointer { position: absolute; left: 141px; top: -3px; width: 17px; height: 20px; }
.log-t { margin-top: 14px; }
.bar-row { display: flex; align-items: center; margin-top: 3px; }
.bar-col { width: 165px; }
.bar { height: 15px; border-radius: 2px; background: linear-gradient(90deg, #eed9a6, #e5a878 28%, #c9664b 55%, #a23a2e 80%, #701f19); }
.ends { display: flex; justify-content: space-between; font-size: 13.5px; line-height: 20px; font-weight: 500; color: #4a4f66; }
.hi { letter-spacing: -.2px; }
.i-gear { width: 16px; height: 16px; margin: -8px 0 0 13px; }
.filter { height: 100px; padding-top: 10px; }
.fl { display: flex; align-items: center; height: 20px; }
.toggle { width: 34px; height: 20px; border-radius: 10px; background: #aeb0bf; position: relative; margin-right: 5px; }
.toggle::after { content: ''; position: absolute; left: 1px; top: 1px; width: 18px; height: 18px; border-radius: 50%; background: #fff; }
.range { display: flex; align-items: center; height: 17px; margin-top: 9px; }
.range i { width: 17px; height: 17px; border: 1.5px solid #d4dbe9; border-radius: 50%; background: #fff; flex: none; }
.range u { width: 131px; height: 4px; background: #dbe2ef; flex: none; }
.i-undo { width: 15px; height: 15px; margin-left: 13px; }
.nums { display: flex; gap: 46px; margin-top: 2px; }
.nums span { width: 59px; height: 28px; border: 1px solid #dfe1eb; border-radius: 2px; font-size: 12px; line-height: 26px; padding-left: 3px; color: #cfd0d9; }
.save { align-items: center; padding-top: 9px; margin-top: -1px; }
.btn { width: 198px; height: 42px; margin-left: 1px; border-radius: 4px; background: #4a6dc5; color: #fff; display: flex; align-items: center; justify-content: center; font-size: 14px; font-weight: 600; letter-spacing: .3px; }
.found { font-size: 12.5px; line-height: 18px; margin-top: 7px; color: #666a7b; font-weight: 500; letter-spacing: .1px; }
.output { flex: 1; margin: 0 7px 0 13px; border: 1px solid #e4e3ed; border-bottom: 0; border-radius: 5px 5px 0 0; display: flex; flex-direction: column; position: relative; overflow: hidden; }
.tabs { height: 41px; flex: none; display: flex; border-bottom: 1px solid #e4e3ed; padding: 0 28px 0 17px; }
.tab { display: flex; align-items: center; height: 40px; border-bottom: 4px solid transparent; font-size: 16px; font-weight: 600; color: #20264a; margin-right: 26px; padding-top: 3px; letter-spacing: .22px; }
.tab.on { border-color: #4a6dc5; width: 265px; }
.i-calc { width: 16px; height: 18px; margin-right: 10px; }
.i-dist { width: 18px; height: 18px; margin-right: 8px; }
.i-dbl { width: 14px; height: 14px; margin: 13px 0 0 auto; }
.pills { display: flex; gap: 10px; padding: 7px 0 0 18px; }
.pill { height: 34px; width: 97px; border: 1px solid #e8e7ee; border-radius: 17px; display: flex; align-items: center; justify-content: center; font-size: 13px; font-weight: 600; color: #5a5e70; }
.pill.on { width: 120px; background: #4a6dc5; border-color: #4a6dc5; color: #fff; }
.help { margin: 56px 0 0 302px; font-size: 14px; line-height: 20.8px; letter-spacing: .27px; color: #5b6075; }
.help p { margin: 0; white-space: nowrap; }
.li { padding-left: 6px; display: flex; }
.wide { letter-spacing: .33px; }
.li span { width: 17px; flex: none; }
.shade { position: absolute; left: 52px; right: 432px; bottom: -14px; height: 14px; box-shadow: 0 0 18px 6px #d2d1d4; }
</style>
